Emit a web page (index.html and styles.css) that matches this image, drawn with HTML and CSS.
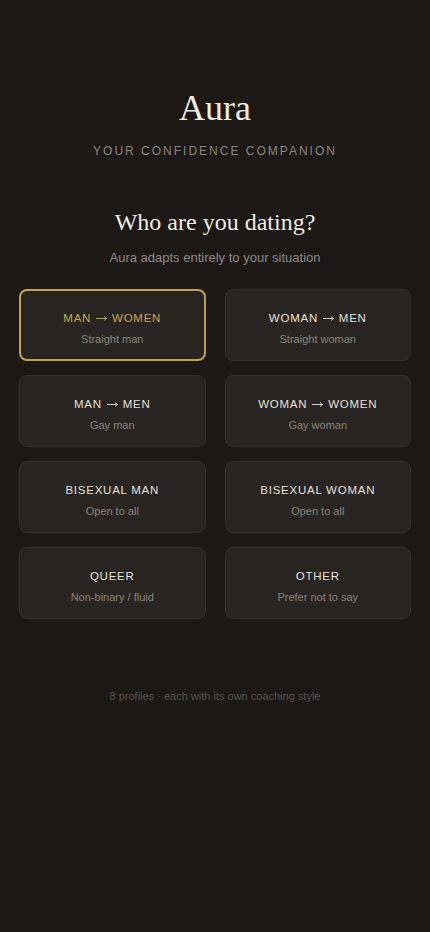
FILE: index.html
```html
<!DOCTYPE html>
<html lang="en">
<head>
  <meta charset="UTF-8">
  <title>Aura</title>
  <link rel="stylesheet" href="styles.css">
</head>
<body>

<div class="screen">
  <!-- brand -->
  <header class="brand">
    <h1 class="logo">Aura</h1>
    <div class="tagline">YOUR CONFIDENCE COMPANION</div>
  </header>

  <section class="question">
    <h2>Who are you dating?</h2>
    <p>Aura adapts entirely to your situation</p>
  </section>

  <div class="options">
    <button class="option selected">
      <span class="opt-title">MAN <svg class="arr" viewBox="0 0 11 8"><path d="M0 4.5H10.5M8 2.5L10.5 4.5L8 6.5"/></svg> WOMEN</span>
      <span class="opt-sub">Straight man</span>
    </button>
    <button class="option">
      <span class="opt-title">WOMAN <svg class="arr" viewBox="0 0 11 8"><path d="M0 4.5H10.5M8 2.5L10.5 4.5L8 6.5"/></svg> MEN</span>
      <span class="opt-sub">Straight woman</span>
    </button>
    <button class="option">
      <span class="opt-title">MAN <svg class="arr" viewBox="0 0 11 8"><path d="M0 4.5H10.5M8 2.5L10.5 4.5L8 6.5"/></svg> MEN</span>
      <span class="opt-sub">Gay man</span>
    </button>
    <button class="option">
      <span class="opt-title">WOMAN <svg class="arr" viewBox="0 0 11 8"><path d="M0 4.5H10.5M8 2.5L10.5 4.5L8 6.5"/></svg> WOMEN</span>
      <span class="opt-sub">Gay woman</span>
    </button>
    <button class="option">
      <span class="opt-title">BISEXUAL MAN</span>
      <span class="opt-sub">Open to all</span>
    </button>
    <button class="option">
      <span class="opt-title">BISEXUAL WOMAN</span>
      <span class="opt-sub">Open to all</span>
    </button>
    <button class="option">
      <span class="opt-title">QUEER</span>
      <span class="opt-sub">Non-binary / fluid</span>
    </button>
    <button class="option">
      <span class="opt-title">OTHER</span>
      <span class="opt-sub">Prefer not to say</span>
    </button>
  </div>

  <p class="footnote">8 profiles &middot; each with its own coaching style</p>
</div>

</body>
</html>
```

FILE: styles.css
```css
body {
  margin: 0;
  padding: 0;
  background: #1c1816;
  color: #ece7e0;
  font-family: 'Liberation Sans', Arial, sans-serif;
}
.screen {
  min-height: 932px;
  padding: 0 19px;
  box-sizing: border-box;
}

/* header */
.brand {
  text-align: center;
  padding-top: 88px;
}
.logo {
  margin: 0;
  font-family: 'Liberation Serif', Georgia, serif;
  font-weight: normal;
  font-size: 36px;
  line-height: 40px;
  color: #f1ece4;
}
.tagline {
  margin-top: 16px;
  font-size: 12px;
  letter-spacing: 2px;
  color: #8c867e;
}

.question {
  text-align: center;
  margin-top: 50px;
}
.question h2 {
  margin: 0;
  font-family: 'Liberation Serif', Georgia, serif;
  font-weight: normal;
  font-size: 24px;
  line-height: 28px;
  color: #f1ece4;
}
.question p {
  margin: 14px 0 0;
  font-size: 13px;
  color: #8f8982;
}

/* options grid */
.options {
  display: grid;
  grid-template-columns: 1fr 1fr;
  column-gap: 19px;
  row-gap: 14px;
  margin-top: 24px;
}
.option {
  height: 72px;
  box-sizing: border-box;
  display: flex;
  flex-direction: column;
  align-items: center;
  justify-content: center;
  gap: 8px;
  background: #282421;
  border: 1px solid #35302b;
  border-radius: 8px;
  font-family: inherit;
  cursor: pointer;
  padding: 6px 0 0;
}
.opt-title {
  font-size: 11.5px;
  line-height: 14px;
  letter-spacing: 0.75px;
  color: #e6e1da;
}
.arr {
  width: 11px;
  height: 8px;
  margin: 0 1px;
  vertical-align: 0;
  fill: none;
  stroke: currentColor;
  stroke-width: 0.9;
}
.opt-sub {
  font-size: 11px;
  line-height: 13px;
  color: #8a847c;
}
.option.selected {
  border: 2px solid #c4a24a;
}
.option.selected .opt-title {
  color: #c9a84c;
}

.footnote {
  text-align: center;
  margin: 71px 0 0;
  font-size: 11px;
  color: #57524c;
}
```
